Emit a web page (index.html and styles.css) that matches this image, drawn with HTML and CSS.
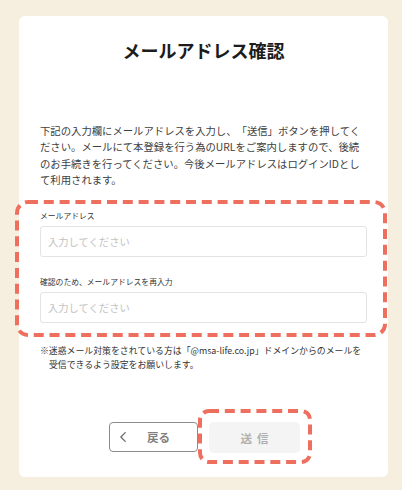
FILE: index.html
```html
<!DOCTYPE html>
<html lang="ja">
<head>
<meta charset="utf-8">
<title>メールアドレス確認</title>
<link rel="stylesheet" href="styles.css">
</head>
<body>
<main class="card">
  <h1 class="title">メールアドレス確認</h1>
  <p class="lead">下記の入力欄にメールアドレスを入力し、「送信」ボタンを押してください。メールにて本登録を行う為のURLをご案内しますので、後続のお手続きを行ってください。今後メールアドレスはログインIDとして利用されます。</p>
  <div class="fields">
    <svg class="frame frame-fields" aria-hidden="true"><rect width="100%" height="100%" rx="11" ry="11"></rect></svg>
    <label class="field-label" for="mail">メールアドレス</label>
    <input class="field-input" id="mail" type="email" placeholder="入力してください">
    <label class="field-label second" for="mail2">確認のため、メールアドレスを再入力</label>
    <input class="field-input" id="mail2" type="email" placeholder="入力してください">
  </div>
  <p class="note">※迷惑メール対策をされている方は「@msa-life.co.jp」ドメインからのメールを受信できるよう設定をお願いします。</p>
  <div class="actions">
    <button class="btn-back" type="button">
      <svg class="chev" viewBox="0 0 6 10" aria-hidden="true"><polyline points="5.2,0.6 0.9,5 5.2,9.4"></polyline></svg>
      <span>戻る</span>
    </button>
    <div class="send-wrap">
      <svg class="frame frame-send" aria-hidden="true"><rect width="100%" height="100%" rx="9" ry="9"></rect></svg>
      <button class="btn-send" type="button" disabled>送信</button>
    </div>
  </div>
</main>
</body>
</html>
```
FILE: styles.css
```css
html, body {
  margin: 0;
  padding: 0;
}
body {
  width: 402px;
  height: 490px;
  background: #f6efe0;
  font-family: "Noto Sans CJK JP", "Noto Sans", sans-serif;
  text-spacing-trim: space-all;
  overflow: hidden;
}
.card {
  box-sizing: border-box;
  width: 369px;
  margin: 16px 0 0 19px;
  padding: 22px 21px 24px;
  background: #ffffff;
  border-radius: 6px;
}
.title {
  margin: 0;
  font-size: 18px;
  line-height: 24px;
  font-weight: 700;
  color: #1c1c1c;
  text-align: center;
}
.lead {
  margin: 60.8px 0 0;
  font-size: 10.35px;
  line-height: 16.4px;
  color: #404040;
}
.fields {
  position: relative;
  margin-top: 21.6px;
  display: flex;
  flex-direction: column;
}
.frame {
  position: absolute;
  overflow: visible;
  pointer-events: none;
}
.frame rect {
  fill: none;
  stroke: #ef6f5f;
  stroke-width: 4;
  stroke-dasharray: 10 5.8;
}
.frame-fields {
  left: -23px;
  right: -18px;
  top: -8px;
  bottom: -12.5px;
  width: calc(100% + 41px);
  height: calc(100% + 20.5px);
}
.field-label {
  font-size: 7.8px;
  line-height: 12px;
  color: #333333;
}
.field-label.second {
  margin-top: 18.5px;
}
.field-input {
  box-sizing: border-box;
  margin: 4px 0 0;
  width: 100%;
  height: 31px;
  padding: 0 7px;
  border: 1px solid #e3e3e3;
  border-radius: 3px;
  background: #ffffff;
  font-family: inherit;
  font-size: 10.3px;
  color: #333333;
  outline: none;
}
.field-input::placeholder {
  color: #c2c2c2;
}
.note {
  margin: 21px 0 0;
  padding-left: 8.9px;
  text-indent: -8.9px;
  font-size: 8.9px;
  line-height: 14px;
  color: #333333;
}
.actions {
  margin-top: 50.5px;
  display: flex;
  justify-content: center;
  align-items: flex-start;
  gap: 11px;
  padding-left: 2px;
}
.btn-back {
  box-sizing: border-box;
  width: 89px;
  height: 30px;
  display: flex;
  align-items: center;
  padding: 0 0 0 10px;
  gap: 21px;
  border: 1.5px solid #8c8c8c;
  border-radius: 4px;
  background: #ffffff;
  font-family: inherit;
  font-size: 11.5px;
  font-weight: 700;
  color: #808080;
}
.chev {
  width: 6px;
  height: 10px;
}
.chev polyline {
  fill: none;
  stroke: #6e6e6e;
  stroke-width: 1.3;
  stroke-linecap: round;
  stroke-linejoin: round;
}
.send-wrap {
  position: relative;
}
.frame-send {
  left: -9px;
  right: -10px;
  top: -11px;
  bottom: -9px;
  width: calc(100% + 19px);
  height: calc(100% + 20px);
}
.btn-send {
  box-sizing: border-box;
  display: block;
  width: 91px;
  height: 31px;
  padding: 0 0 0 5px;
  border: none;
  border-radius: 5px;
  background: #f4f4f4;
  font-family: inherit;
  font-size: 11.5px;
  font-weight: 700;
  letter-spacing: 5px;
  color: #b0b0b0;
}
```
